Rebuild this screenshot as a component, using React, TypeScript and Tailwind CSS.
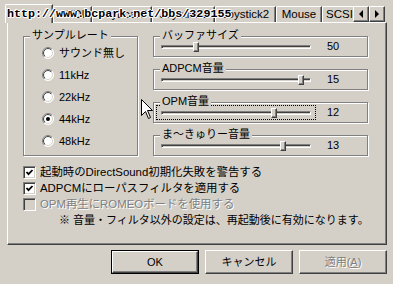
const tabs = [
  { label: "MIDI", w: "w-[39px] justify-center" },
  { label: "Keyboard", w: "w-[60px] justify-center" },
  { label: "Joystick1", w: "w-[63px] justify-center" },
  { label: "Joystick2", w: "w-[61px] justify-center" },
  { label: "Mouse", w: "w-[46px] justify-center" },
  { label: "SCSI", w: "w-[44px] justify-start pl-[3px]" },
];

const rates = [
  { label: "サウンド無し", checked: false },
  { label: "11kHz", checked: false },
  { label: "22kHz", checked: false },
  { label: "44kHz", checked: true },
  { label: "48kHz", checked: false },
];

const sliders = [
  { title: "バッファサイズ", value: 50, frac: (50 - 10) / 190, focus: false },
  { title: "ADPCM音量", value: 15, frac: 15 / 16, focus: false },
  { title: "OPM音量", value: 12, frac: 12 / 16, focus: true },
  { title: "ま～きゅりー音量", value: 13, frac: 13 / 16, focus: false },
];

const Radio = ({ checked }: { checked: boolean }) => (
  <svg width="12" height="12" viewBox="0 0 12 12">
    <circle cx="6" cy="6" r="5.5" fill="#fff" stroke="url(#rOuter)" />
    <circle cx="6" cy="6" r="4.5" fill="none" stroke="url(#rInner)" />
    {checked && <circle cx="6" cy="6" r="2" fill="#000" />}
  </svg>
);

const CheckBox = ({ checked, disabled }: { checked?: boolean; disabled?: boolean }) => (
  <div
    className={
      "flex h-[13px] w-[13px] items-center justify-center border border-t-[#808080] border-l-[#808080] border-r-white border-b-white shadow-[inset_1px_1px_0_#404040,inset_-1px_-1px_0_#d4d0c8] " +
      (disabled ? "bg-[#d4d0c8]" : "bg-white")
    }
  >
    {checked && (
      <svg width="9" height="9" viewBox="0 0 9 9">
        <path d="M1.5 4 L3.5 6.2 L7.5 2" fill="none" stroke="#000" strokeWidth="1.8" />
      </svg>
    )}
  </div>
);

const Slider = ({ frac, focus }: { frac: number; focus: boolean }) => (
  <div
    className={
      "flex h-[15px] w-[160px] items-center px-[5px] " +
      (focus ? "outline outline-dotted outline-black -outline-offset-1" : "")
    }
  >
    <div className="relative h-[4px] w-[150px] border border-t-[#808080] border-l-[#808080] border-r-white border-b-white shadow-[inset_1px_1px_0_#404040]">
      <div
        className="absolute top-[-4px] h-[10px] w-[6px] border border-t-white border-l-white border-r-[#404040] border-b-[#404040] bg-[#d4d0c8] shadow-[inset_-1px_-1px_0_#808080]"
        style={{ left: Math.round(1 + frac * 144) }}
      />
    </div>
  </div>
);

const Button = ({ children, isDefault, disabled }: { children: React.ReactNode; isDefault?: boolean; disabled?: boolean }) => (
  <div className={"h-[24px] w-[88px] " + (isDefault ? "border border-black" : "")}>
    <div
      className={
        "flex h-full w-full items-center justify-center border border-t-white border-l-white border-r-[#404040] border-b-[#404040] shadow-[inset_-1px_-1px_0_#808080] " +
        (disabled ? "text-[#808080] [text-shadow:1px_1px_0_#fff]" : "")
      }
    >
      {children}
    </div>
  </div>
);

export default function App() {
  return (
    <div className="relative h-[284px] w-[393px] overflow-hidden bg-[#d4d0c8] pt-[4px] font-['Liberation_Sans','Noto_Sans_CJK_JP',sans-serif] text-[11px] leading-[13px] text-black">
      <svg width="0" height="0" className="absolute">
        <defs>
          <linearGradient id="rOuter" x1="0" y1="0" x2="1" y2="1">
            <stop offset="50%" stopColor="#808080" />
            <stop offset="50%" stopColor="#ffffff" />
          </linearGradient>
          <linearGradient id="rInner" x1="0" y1="0" x2="1" y2="1">
            <stop offset="50%" stopColor="#404040" />
            <stop offset="50%" stopColor="#d4d0c8" />
          </linearGradient>
        </defs>
      </svg>

      {/* tab strip */}
      <div className="relative z-10 ml-[5px] flex h-[19px] items-start">
        <div className="h-[19px] w-[48px] rounded-tl-[2px] border-t border-l border-r border-t-white border-l-white border-r-[#404040] bg-[#d4d0c8] shadow-[inset_-1px_0_0_#808080]" />
        {tabs.map((t) => (
          <div
            key={t.label}
            className={
              "mt-[2px] flex h-[16px] items-center rounded-tl-[2px] border-t border-l border-r border-t-white border-l-white border-r-[#404040] pb-[1px] text-[11.5px] shadow-[inset_-1px_0_0_#808080] " +
              t.w
            }
          >
            {t.label}
          </div>
        ))}
      </div>
      <div className="absolute right-[8px] top-[6px] z-20 flex">
        {["M5 0 L1 4 L5 8 Z", "M1 0 L5 4 L1 8 Z"].map((d) => (
          <div
            key={d}
            className="flex h-[16px] w-[16px] items-center justify-center border border-t-white border-l-white border-r-[#404040] border-b-[#404040] bg-[#d4d0c8] shadow-[inset_-1px_-1px_0_#808080]"
          >
            <svg width="6" height="8" viewBox="0 0 6 8">
              <path d={d} fill="#000" />
            </svg>
          </div>
        ))}
      </div>

      {/* watermark */}
      <div className="absolute left-[7px] top-[8px] z-30 font-['Liberation_Mono',monospace] text-[11.7px] font-bold leading-[12px] [text-shadow:1px_0_0_#fff,-1px_0_0_#fff,0_1px_0_#fff,0_-1px_0_#fff,1px_1px_0_#fff,-1px_-1px_0_#fff]">
        http://www.bcpark.net/bbs/329155
      </div>

      {/* tab panel */}
      <div className="-mt-[1px] ml-[7px] h-[223px] w-[380px] border border-t-white border-l-white border-r-[#404040] border-b-[#404040] shadow-[inset_-1px_-1px_0_#808080]">
        <div className="flex gap-[15px] pl-[15px] pt-[13px]">
          <div className="relative h-[120px] w-[115px] border border-[#808080] shadow-[inset_1px_1px_0_#fff,1px_1px_0_#fff]">
            <span className="absolute -top-[8px] left-[6px] bg-[#d4d0c8] px-[2px]">サンプルレート</span>
            <div className="flex flex-col pl-[18px] pt-[5px]">
              {rates.map((r) => (
                <div key={r.label} className="flex h-[22px] items-center gap-[5px]">
                  <Radio checked={r.checked} />
                  <span>{r.label}</span>
                </div>
              ))}
            </div>
          </div>

          <div className="flex flex-col gap-[12px]">
            {sliders.map((s) => (
              <div
                key={s.title}
                className="relative flex h-[21px] w-[215px] items-center border border-[#808080] pl-[2px] shadow-[inset_1px_1px_0_#fff,1px_1px_0_#fff]"
              >
                <span className="absolute -top-[8px] left-[6px] bg-[#d4d0c8] px-[2px]">{s.title}</span>
                <Slider frac={s.frac} focus={s.focus} />
                <span className="ml-[11px]">{s.value}</span>
              </div>
            ))}
          </div>
        </div>

        <div className="mt-[8px] flex flex-col pl-[15px] text-[11.4px]">
          <div className="flex h-[16px] items-center gap-[4px]">
            <CheckBox checked />
            <span>起動時のDirectSound初期化失敗を警告する</span>
          </div>
          <div className="flex h-[16px] items-center gap-[4px]">
            <CheckBox checked />
            <span>ADPCMにローパスフィルタを適用する</span>
          </div>
          <div className="flex h-[16px] items-center gap-[4px]">
            <CheckBox disabled />
            <span className="text-[#808080] [text-shadow:1px_1px_0_#fff]">OPM再生にROMEOボードを使用する</span>
          </div>
          <div className="flex h-[16px] items-center pl-[36px] text-[11px]">
            ※ 音量・フィルタ以外の設定は、再起動後に有効になります。
          </div>
        </div>
      </div>

      {/* buttons */}
      <div className="mt-[5px] flex justify-end gap-[6px] pr-[6px]">
        <Button isDefault>OK</Button>
        <Button>キャンセル</Button>
        <Button disabled>
          適用(<span className="underline">A</span>)
        </Button>
      </div>

      {/* mouse pointer */}
      <svg className="absolute left-[141px] top-[99px] z-20" width="13" height="21" viewBox="0 0 13 21">
        <path
          d="M0.5 0.5 L0.5 16.5 L4.5 12.5 L7.5 19.5 L9.5 18.5 L6.5 11.5 L11.5 11.5 Z"
          fill="#fff"
          stroke="#000"
          strokeWidth="1"
        />
      </svg>
    </div>
  );
}
